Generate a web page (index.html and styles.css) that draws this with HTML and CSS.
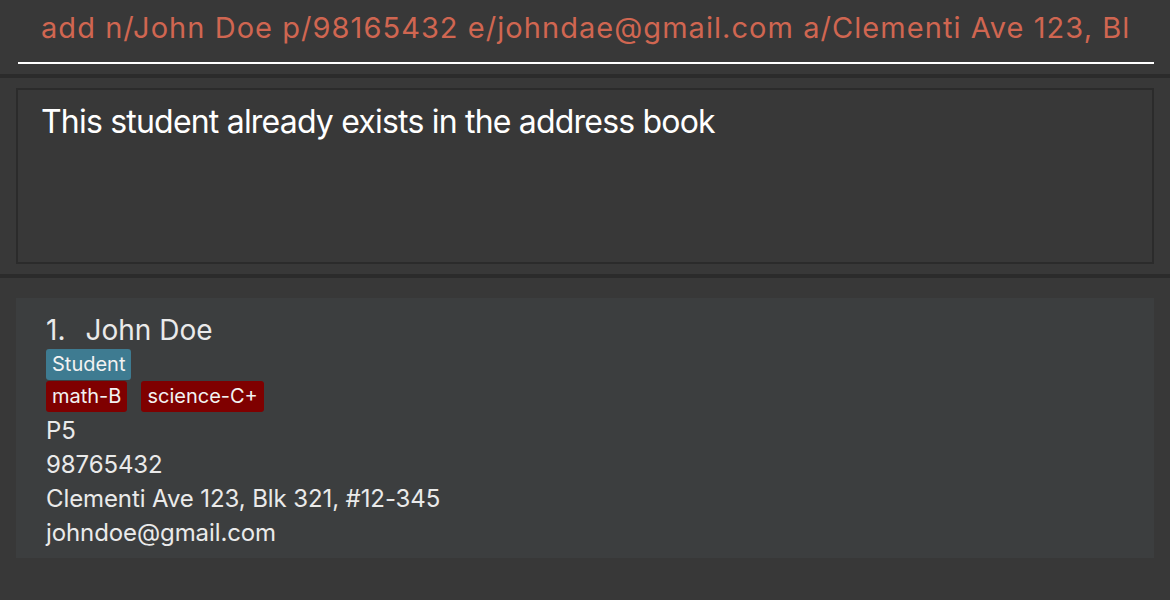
FILE: index.html
```html
<!DOCTYPE html>
<html lang="en">
<head>
<meta charset="utf-8">
<title>Address Book</title>
<link rel="stylesheet" href="styles.css">
</head>
<body>
<div class="app">
  <section class="command-box">
    <div class="command-field">
      <span class="command-text">add n/John Doe p/98165432 e/johndae@gmail.com a/Clementi Ave 123, Bl</span>
    </div>
  </section>
  <div class="divider"></div>
  <section class="result-wrap">
    <div class="result-box">
      <p class="result-text">This student already exists in the address book</p>
    </div>
  </section>
  <div class="divider"></div>
  <section class="list-wrap">
    <div class="card">
      <div class="card-name"><span class="card-index">1.</span><span>John Doe</span></div>
      <div class="tag-row tag-row-role"><span class="tag tag-role">Student</span></div>
      <div class="tag-row tag-row-grades">
        <span class="tag tag-grade">math-B</span>
        <span class="tag tag-grade">science-C+</span>
      </div>
      <div class="card-fields">
        <div class="card-field">P5</div>
        <div class="card-field">98765432</div>
        <div class="card-field">Clementi Ave 123, Blk 321, #12-345</div>
        <div class="card-field">johndoe@gmail.com</div>
      </div>
    </div>
  </section>
</div>
</body>
</html>
```

FILE: styles.css
```css
* {
  box-sizing: border-box;
}

html, body {
  margin: 0;
  padding: 0;
  background: #383838;
  width: 1170px;
  height: 600px;
  overflow: hidden;
}

body {
  font-family: Inter, "Noto Sans", sans-serif;
  color: #ffffff;
}

.app {
  display: flex;
  flex-direction: column;
}

.command-box {
  height: 74px;
  padding: 0 16px 0 18px;
  display: flex;
  align-items: flex-start;
}

.command-field {
  width: 100%;
  height: 64px;
  border-bottom: 2px solid #ffffff;
  padding: 10px 0 0 23px;
  overflow: hidden;
  white-space: nowrap;
}

.command-text {
  color: #d06651;
  font-size: 29px;
  line-height: 36px;
  letter-spacing: 1.05px;
}

.divider {
  height: 4px;
  background: #2b2b2b;
}

.result-wrap {
  padding: 10px 16px;
}

.result-box {
  height: 176px;
  border: 2px solid #2b2b2b;
  padding: 12px 23px;
}

.result-text {
  margin: 0;
  font-size: 32px;
  line-height: 40px;
  letter-spacing: -0.8px;
  color: #ffffff;
}

.list-wrap {
  padding: 20px 16px 0 16px;
}

.card {
  background: #3c3e3f;
  height: 260px;
  padding: 14px 30px 0 30px;
  display: flex;
  flex-direction: column;
  color: #eaeaea;
}

.card-name {
  font-size: 28px;
  line-height: 36px;
  display: flex;
  gap: 20px;
}

.tag-row {
  display: flex;
  gap: 14px;
}

.tag-row-role {
  margin-top: 1px;
}

.tag-row-grades {
  margin-top: 1px;
}

.tag {
  font-size: 20px;
  line-height: 31px;
  padding: 0 6px;
  border-radius: 3px;
  color: #f2f2f2;
}

.tag-role {
  background: #3e7b91;
}

.tag-grade {
  background: #7f0000;
}

.card-fields {
  margin-top: 2px;
  display: flex;
  flex-direction: column;
}

.card-field {
  font-size: 24px;
  line-height: 34px;
  letter-spacing: -0.1px;
}
```
